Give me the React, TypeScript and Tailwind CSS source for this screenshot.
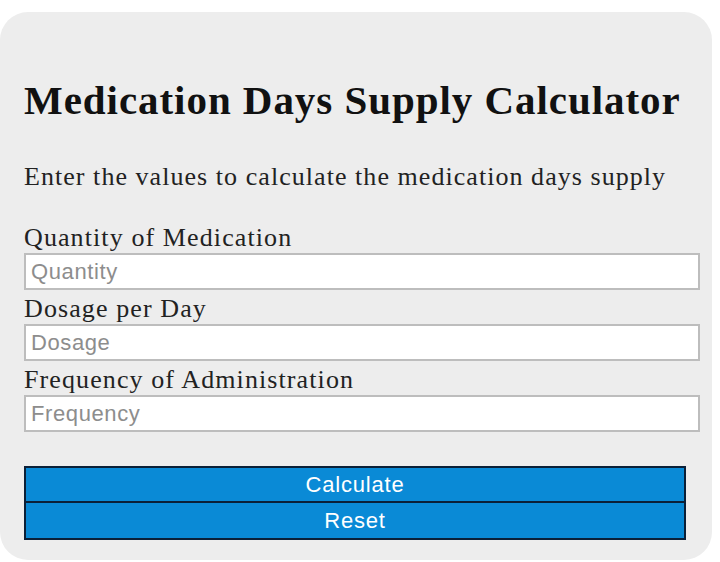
export default function App() {
    const fields = [
        { label: 'Quantity of Medication', placeholder: 'Quantity' },
        { label: 'Dosage per Day', placeholder: 'Dosage' },
        { label: 'Frequency of Administration', placeholder: 'Frequency' }
    ]

    return (
        <div className="min-h-[562px] bg-white pt-[12px]">
            <div className="w-[712px] h-[548px] rounded-[28px] bg-[#ededed] px-[24px] pt-[65px] font-['Liberation_Serif',serif] text-[#111]">
                {/* Title */}
                <h1 className="text-[41px] leading-[46px] font-bold tracking-[0.95px]">Medication Days Supply Calculator</h1>
                <p className="mt-[39px] text-[26px] leading-[30px] tracking-[1.05px] text-[#222]">
                    Enter the values to calculate the medication days supply
                </p>

                {/* Inputs */}
                <div className="mt-[31px] flex flex-col gap-[4px]">
                    {fields.map((f) => (
                        <div key={f.label} className="flex flex-col">
                            <label className="text-[26px] leading-[30px] tracking-[1.1px] text-[#222]">{f.label}</label>
                            <input
                                type="text"
                                placeholder={f.placeholder}
                                className="h-[37px] w-[676px] border-2 border-[#bdbdbd] bg-white px-[5px] font-['Liberation_Sans',sans-serif] text-[22px] tracking-[0.6px] placeholder:text-[#8d8d8d] outline-none"
                            />
                        </div>
                    ))}
                </div>

                {/* Buttons */}
                <div className="mt-[34px] flex flex-col w-[662px]">
                    <button className="h-[37px] border-2 border-[#0b2038] bg-[#0a8ad6] font-['Liberation_Sans',sans-serif] text-[22px] tracking-[0.8px] text-white">
                        Calculate
                    </button>
                    <button className="h-[37px] border-2 border-t-0 border-[#0b2038] bg-[#0a8ad6] font-['Liberation_Sans',sans-serif] text-[22px] tracking-[0.8px] text-white">
                        Reset
                    </button>
                </div>
            </div>
        </div>
    )
}
